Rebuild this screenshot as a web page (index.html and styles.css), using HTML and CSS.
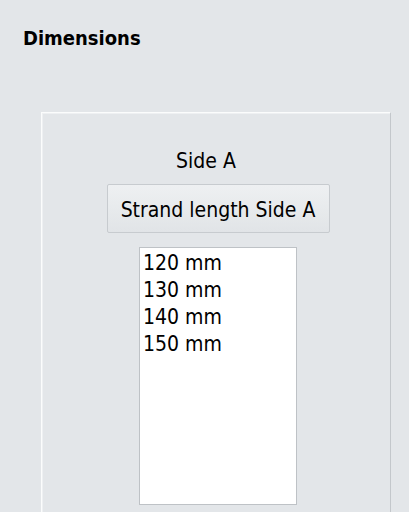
FILE: index.html
```html
<!DOCTYPE html>
<html>
    <head>
        <meta charset="UTF-8">
        <title>Dimensions</title>
        <link rel="stylesheet" href="styles.css">
    </head>
    <body>
        <h1 class="title">Dimensions</h1>
        <div class="group">
            <div class="side_label">Side A</div>
            <button class="strand_btn" type="button">Strand length Side A</button>
            <ul class="length_list">
                <li>120 mm</li>
                <li>130 mm</li>
                <li>140 mm</li>
                <li>150 mm</li>
            </ul>
        </div>
    </body>
</html>
```

FILE: styles.css
```css
body {
    margin : 0;
    background : #e3e6e9;
    font-family : "DejaVu Sans Condensed", "DejaVu Sans", sans-serif;
    font-size : 21px;
    color : #000;
    overflow : hidden;
}
.title {
    margin : 0;
    padding : 27px 0 0 23px;
    font-size : 20px;
    font-weight : bold;
    line-height : 23px;
}
.group {
    box-sizing : border-box;
    width : 350px;
    min-height : 420px;
    margin : 62px 0 0 41px;
    padding : 36px 0 0 4px;
    border-top : 1px solid #fbfcfc;
    border-left : 1px solid #fbfcfc;
    border-right : 1px solid #c3c7cb;
    box-shadow : inset 1px 1px 0 #eef0f2;
    display : flex;
    flex-direction : column;
    align-items : center;
}
.side_label {
    line-height : 24px;
    margin-right : 24px;
}
.strand_btn {
    box-sizing : border-box;
    width : 223px;
    height : 49px;
    margin-top : 11px;
    padding : 3px 0 0 0;
    font-family : inherit;
    font-size : 21px;
    line-height : 24px;
    color : #000;
    border : 1px solid #c7cbcf;
    border-radius : 2px;
    background : linear-gradient(#eef0f2, #e8ebed 45%, #e1e4e7);
}
.length_list {
    box-sizing : border-box;
    width : 158px;
    height : 258px;
    margin : 14px 0 0 0;
    padding : 2px 3px 0;
    list-style : none;
    background : #fff;
    border : 1px solid #bec2c6;
    line-height : 27px;
}
```
